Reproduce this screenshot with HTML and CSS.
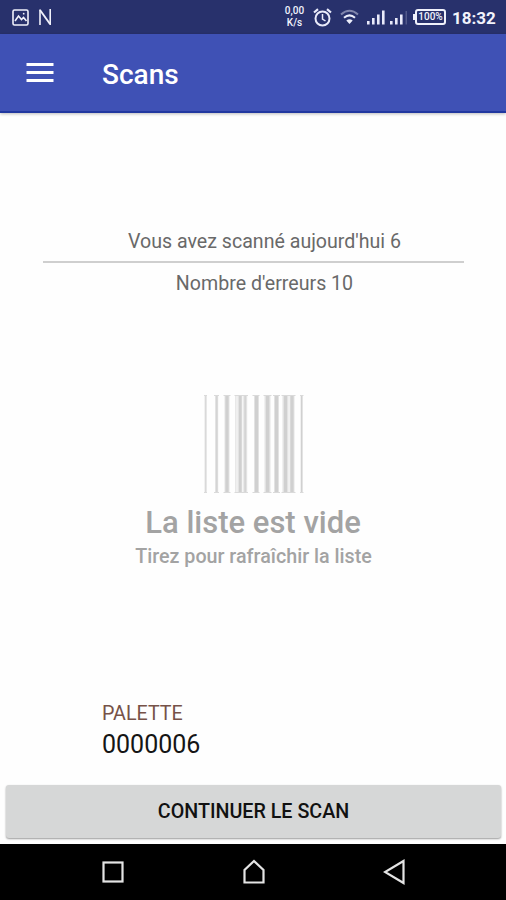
FILE: index.html
```html
<!DOCTYPE html>
<html lang="fr">
<head>
<meta charset="utf-8">
<title>Scans</title>
<link rel="stylesheet" href="styles.css">
</head>
<body>
<div class="screen">
  <div class="status">
    <svg class="picture" width="17" height="17" viewBox="0 0 17 17" fill="none" stroke="#f0f1fa" stroke-width="1.6"><rect x="1" y="1" width="15" height="15" rx="1.5"/><path d="M3 12l3.500-5 3 3.500 2-2 3 3.500"/><circle cx="11.700" cy="4.700" r=".9" fill="#f0f1fa" stroke="none"/></svg>
    <svg class="letter-icon" width="14" height="18" viewBox="0 0 14 18" fill="none" stroke="#f0f1fa"><path d="M2 17V1.500M12.200 1v16" stroke-width="1.600"/><path d="M2 2l10 14" stroke-width="1.900"/></svg>
    <div class="speed"><span>0,00</span><span>K/s</span></div>
    <svg class="alarm" width="19" height="19" viewBox="0 0 19 19" fill="none" stroke="#e9eafa" stroke-width="2"><circle cx="9.500" cy="10.500" r="7"/><path d="M9.500 6v5l3 2" stroke-width="1.500"/><path d="M1 4.500L5 1.200M14 1.200l4 3.300" stroke-width="2.200"/></svg>
    <svg class="wifi" width="19" height="16" viewBox="0 0 19 16" fill="none" stroke="#eceefb" stroke-width="2"><path d="M1 5.500Q9.500-2 18 5.500" opacity=".45"/><path d="M4 8.800Q9.500 4 15 8.800"/><path d="M6.300 11.500Q9.500 8.800 12.700 11.500L9.500 15z" fill="#eceefb" stroke="none"/></svg>
    <svg class="signal" width="42" height="15" viewBox="0 0 42 15" fill="#e9eafa"><path d="M1 11h2.600v3.500H1zM6 8h2.600v6.500H6zM11 4.500h2.600v10H11zM16 .5h2.600v14H16zM24 11h2.600v3.500H24zM29 8h2.600v6.500H29zM34 4.500h2.600v10H34z"/><path d="M39.500 1h1.500v13.500h-1.500z" opacity=".22"/></svg>
    <div class="battery"><span>100%</span></div>
    <span class="clock">18:32</span>
  </div>
  <div class="appbar">
    <svg class="menu" width="28" height="22" viewBox="0 0 28 22" stroke="#fff" stroke-width="3"><path d="M.5 2.500h27M.5 10.500h27M.5 18.500h27"/></svg>
    <h1>Scans</h1>
  </div>
  <main>
    <div class="stats">
      <p class="today">Vous avez scanné aujourd'hui 6</p>
      <p class="errors">Nombre d'erreurs 10</p>
    </div>
    <div class="empty">
      <svg class="barcode" width="100" height="100" viewBox="0 0 100 100"><g fill="#e3e3e3"><path d="M.5 1h2v98h-2zM11 1h3.200v98H11zM20.500 1h5v98h-5zM31.200 1h12v98h-12zM50 1h5v98h-5zM60.500 1h6v98h-6zM70 1h5v98h-5zM78.500 1h6v98h-6zM85.500 1h5v98h-5zM96.500 1h2.500v98h-2.500z"/></g><g fill="#d0d0d0"><path d="M1.500 1h.8v98h-.8zM12.200 1h1.200v98h-1.200zM21.500 1h3v98h-3zM35 1h2.500v98H35zM40.500 1h1.300v98h-1.300zM51 1h3v98h-3zM62 1h3.200v98H62zM71 1h3v98h-3zM80 1h3v98h-3zM86.500 1h3v98h-3zM97 1h1v98h-1z"/></g><path d="M33 2v96M38.700 2v96" stroke="#f6f6f6" stroke-width="1.300"/><path d="M0 1.500h3M10 1.500h5M19.500 1.500h7M30.500 1.500h13.500M48.500 1.500h7M59.500 1.500h8M69 1.500h7M77.500 1.500h14M96 1.500h3.500M0 98.500h3M10 98.500h5M19.500 98.500h7M30.500 98.500h13.500M48.500 98.500h7M59.500 98.500h8M69 98.500h7M77.500 98.500h14M96 98.500h3.500" stroke="#dadada"/></svg>
      <h2>La liste est vide</h2>
      <p class="hint">Tirez pour rafraîchir la liste</p>
    </div>
    <div class="pallet">
      <p class="label">PALETTE</p>
      <p class="number">0000006</p>
    </div>
    <button class="continue">CONTINUER LE SCAN</button>
  </main>
  <nav>
    <svg width="24" height="26" viewBox="0 0 24 26"><rect x="2.500" y="3.500" width="19" height="19"/></svg>
    <svg width="24" height="26" viewBox="0 0 24 26"><path d="M2.500 23.500V11L12 2l9.500 9v12.500z"/></svg>
    <svg width="24" height="26" viewBox="0 0 24 26"><path d="M20.500 2v22L2 13z"/></svg>
  </nav>
</div>
</body>
</html>
```
FILE: styles.css
```css
* { box-sizing: border-box; }
body, h1, h2, p { margin: 0; }
body { font-family: Roboto, sans-serif; background: #fff; }
.screen { width: 506px; height: 900px; display: flex; flex-direction: column; overflow: hidden; }
svg { display: block; flex: none; }
.status { height: 34px; flex: none; background: #28316c; display: flex; align-items: center; padding-left: 12px; color: #f2f3fc; }
.letter-icon { margin-left: 9px; }
.speed { width: 23px; margin-left: 231px; font-size: 10px; line-height: 12px; font-weight: 500; text-align: center; display: flex; flex-direction: column; }
.alarm { margin-left: 7px; }
.wifi { margin-left: 8px; }
.signal { margin-left: 7px; }
.battery { width: 31px; height: 16px; margin-left: 7px; border: 2px solid #f0f1fb; border-radius: 3px; font-size: 10px; font-weight: 500; line-height: 12px; position: relative; display: flex; justify-content: center; }
.battery::before { content: ""; position: absolute; left: -4px; top: 3px; width: 2px; height: 6px; background: #f0f1fb; }
.clock { margin-left: 6px; font-size: 17px; font-weight: 700; line-height: 20px; margin-top: 1px; }
.appbar { height: 79px; flex: none; background: #3f51b5; border-bottom: 2px solid #2138a0; box-shadow: 0 1px 3px #0004; position: relative; display: flex; align-items: center; padding-left: 26px; color: #fff; }
.appbar .menu { margin-top: 1px; }
.appbar h1 { margin: 5px 0 0 48px; font-size: 28px; line-height: 34px; font-weight: 500; }
main { flex: 1; display: flex; flex-direction: column; background: #fefefe; }
.stats { margin: 116px 42px 0 43px; text-align: center; color: #696969; font-size: 19.6px; line-height: 26px; }
.today { height: 34px; border-bottom: 2px solid #cfcfcf; padding-left: 22px; }
.errors { margin-top: 8px; padding-left: 22px; }
.empty { margin-top: 97px; display: flex; flex-direction: column; align-items: center; color: #a3a3a3; }
.barcode { margin-left: 2px; }
.empty h2 { margin-top: 11px; font-size: 31px; line-height: 36px; font-weight: 500; }
.hint { margin-top: 4px; font-size: 19.7px; line-height: 24px; font-weight: 500; padding-left: 1px; }
.pallet { margin: 133px 0 0 102px; }
.label { font-size: 19.7px; line-height: 24px; color: #765248; }
.number { font-size: 25px; line-height: 30px; margin-top: 4px; color: #151515; }
.continue { margin: auto 5px 6px 6px; height: 53px; border: 0; border-radius: 3px; background: #d6d7d7; box-shadow: 0 1px 2px #0006; font: 500 19.7px/24px Roboto, sans-serif; color: #111; padding: 1px 0 0; }
nav { height: 56px; flex: none; background: #000; display: flex; align-items: center; justify-content: space-between; padding: 0 99px 0 101px; }
nav svg { fill: none; stroke: #e4e4e4; stroke-width: 2.2; }
```
